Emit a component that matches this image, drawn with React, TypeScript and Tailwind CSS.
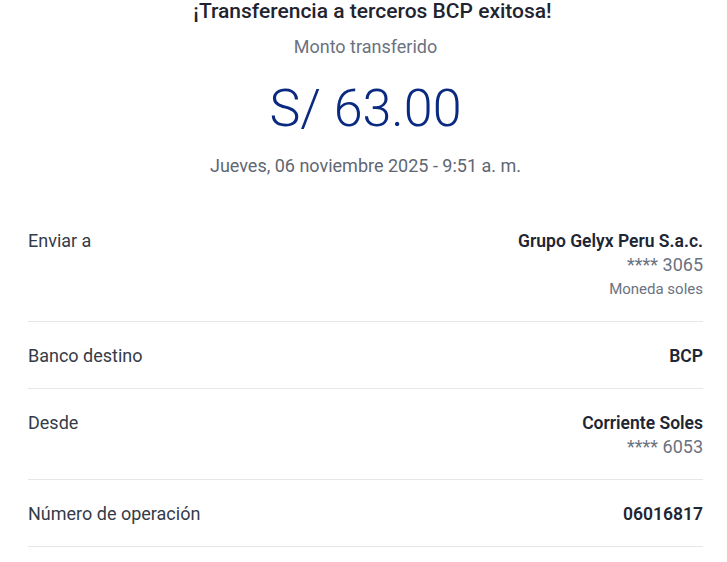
export default function App() {
  const rows = [
    {
      label: "Enviar a",
      value: "Grupo Gelyx Peru S.a.c.",
      sub: ["**** 3065"],
      note: "Moneda soles",
    },
    { label: "Banco destino", value: "BCP", sub: [] as string[] },
    { label: "Desde", value: "Corriente Soles", sub: ["**** 6053"] },
    { label: "Número de operación", value: "06016817", sub: [] as string[] },
  ];

  return (
    <div
      className="w-[727px] h-[562px] overflow-hidden bg-white"
      style={{ fontFamily: "Roboto, 'Noto Sans', sans-serif" }}
    >
      <div className="flex flex-col items-center pl-[4px]">
        <h1 className="mt-[-3px] ml-[14px] text-[21px] leading-[28px] font-medium text-[#1f2430]">
          ¡Transferencia a terceros BCP exitosa!
        </h1>
        <p className="mt-[10px] text-[18px] leading-[24px] text-[#6b7280]">Monto transferido</p>
        <p className="mt-[20px] text-[52px] leading-[60px] font-light text-[#0a2a82]">S/ 63.00</p>
        <p className="mt-[15px] text-[18px] leading-[24px] text-[#5f6673]">
          Jueves, 06 noviembre 2025 - 9:51 a. m.
        </p>
      </div>

      <div className="mt-[29px] ml-[28px] mr-[24px]">
        {rows.map((r) => (
          <div
            key={r.label}
            className="flex justify-between border-b border-[#e5e7eb] pt-[22px] pb-[20px]"
          >
            <span className="text-[18px] leading-[24px] text-[#343b48]">{r.label}</span>
            <div className="flex flex-col items-end">
              <span className="text-[17.5px] leading-[24px] font-semibold text-[#1e2533]">{r.value}</span>
              {r.sub.map((s) => (
                <span key={s} className="text-[18px] leading-[24px] text-[#6b7280]">
                  {s}
                </span>
              ))}
              {r.note && (
                <span className="text-[15px] leading-[24px] text-[#6b7280]">{r.note}</span>
              )}
            </div>
          </div>
        ))}
      </div>
    </div>
  );
}
